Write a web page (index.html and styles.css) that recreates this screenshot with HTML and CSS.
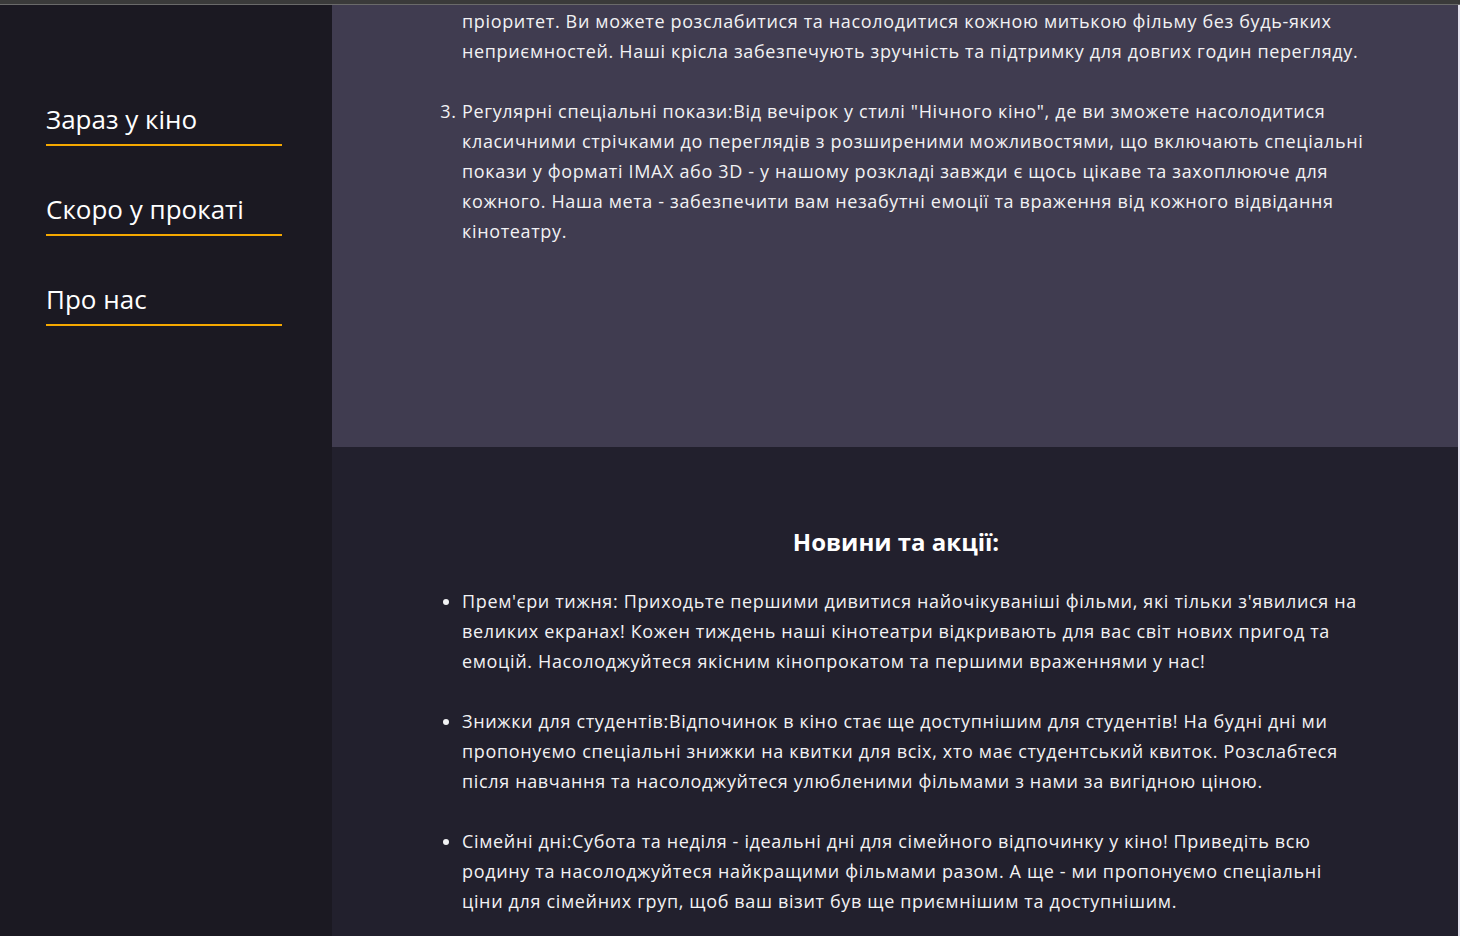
FILE: index.html
```html
<!DOCTYPE html>
<html lang="uk">
<head>
<meta charset="utf-8">
<title>Кінотеатр</title>
<link rel="stylesheet" href="styles.css">
</head>
<body>
<div class="topbar"></div>
<div class="page">
  <aside class="sidebar">
    <nav class="nav">
      <a class="nav-link" href="#">Зараз у кіно</a>
      <a class="nav-link" href="#">Скоро у прокаті</a>
      <a class="nav-link" href="#">Про нас</a>
    </nav>
  </aside>
  <main class="main">
    <section class="about">
      <ol class="text-list" start="2">
        <li class="continued">пріоритет. Ви можете розслабитися та насолодитися кожною митькою фільму без будь-яких неприємностей. Наші крісла забезпечують зручність та підтримку для довгих годин перегляду.</li>
        <li>Регулярні спеціальні покази:Від вечірок у стилі "Нічного кіно", де ви зможете насолодитися класичними стрічками до переглядів з розширеними можливостями, що включають спеціальні покази у форматі IMAX або 3D - у нашому розкладі завжди є щось цікаве та захоплююче для кожного. Наша мета - забезпечити вам незабутні емоції та враження від кожного відвідання кінотеатру.</li>
      </ol>
    </section>
    <section class="news">
      <h2 class="news-title">Новини та акції:</h2>
      <ul class="text-list">
        <li>Прем'єри тижня: Приходьте першими дивитися найочікуваніші фільми, які тільки з'явилися на великих екранах! Кожен тиждень наші кінотеатри відкривають для вас світ нових пригод та емоцій. Насолоджуйтеся якісним кінопрокатом та першими враженнями у нас!</li>
        <li>Знижки для студентів:Відпочинок в кіно стає ще доступнішим для студентів! На будні дні ми пропонуємо спеціальні знижки на квитки для всіх, хто має студентський квиток. Розслабтеся після навчання та насолоджуйтеся улюбленими фільмами з нами за вигідною ціною.</li>
        <li>Сімейні дні:Субота та неділя - ідеальні дні для сімейного відпочинку у кіно! Приведіть всю родину та насолоджуйтеся найкращими фільмами разом. А ще - ми пропонуємо спеціальні ціни для сімейних груп, щоб ваш візит був ще приємнішим та доступнішим.</li>
      </ul>
    </section>
  </main>
</div>
</body>
</html>
```

FILE: styles.css
```css
* { box-sizing: border-box; }
html, body { margin: 0; padding: 0; }
body {
  background: #22202d;
  color: #f2f2f4;
  font-family: "Open Sans", "Noto Sans", sans-serif;
  height: 936px;
  overflow: hidden;
}
.topbar {
  height: 5px;
  background: #3a3a3a;
  border-bottom: 1px solid #6a6a6a;
}
.page {
  display: flex;
  min-height: 931px;
  border-right: 2px solid #e4e2ee;
}
.sidebar {
  width: 332px;
  flex: 0 0 332px;
  background: #1b1922;
}
.nav {
  display: flex;
  flex-direction: column;
  gap: 46px;
  padding: 97px 0 0 46px;
}
.nav-link {
  display: block;
  width: 236px;
  color: #ffffff;
  text-decoration: none;
  font-size: 26px;
  line-height: 34px;
  padding-bottom: 8px;
  border-bottom: 2px solid #f5a800;
}
.main {
  flex: 1;
  display: flex;
  flex-direction: column;
}
.about {
  background: #403c50;
  height: 442px;
  padding: 1px 93px 0 90px;
}
.news {
  flex: 1;
  background: #22202d;
  padding: 80px 93px 0 90px;
}
.news-title {
  margin: 0 0 29px;
  padding-left: 5px;
  text-align: center;
  font-size: 24px;
  line-height: 30px;
  font-weight: 700;
  color: #ffffff;
}
.text-list {
  margin: 0;
  padding-left: 40px;
  font-size: 18px;
  line-height: 30px;
  letter-spacing: 0.65px;
}
.text-list li + li { margin-top: 30px; }
.continued { list-style: none; }
```
